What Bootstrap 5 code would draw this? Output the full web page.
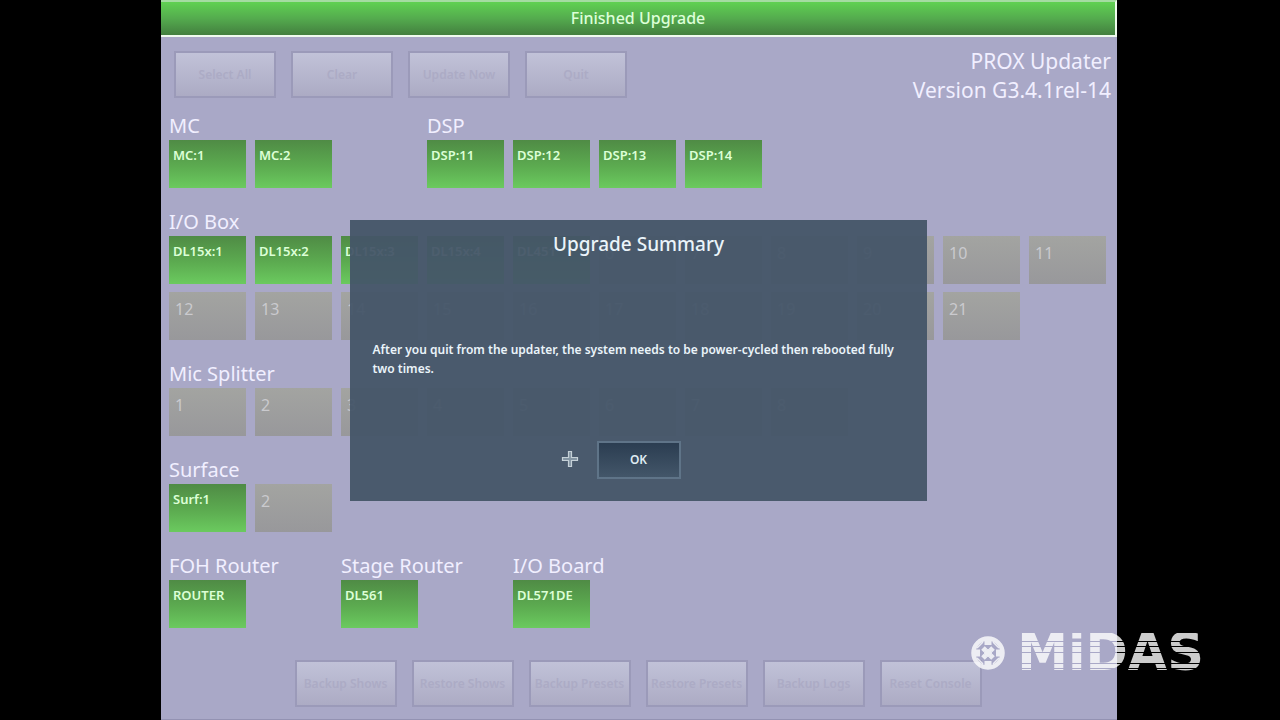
<!DOCTYPE html>
<html lang="en">
<head>
<meta charset="utf-8">
<meta name="viewport" content="width=device-width, initial-scale=1">
<title>PROX Updater</title>
<link href="https://cdn.jsdelivr.net/npm/bootstrap@5.3.0/dist/css/bootstrap.min.css" rel="stylesheet">
<style>
  body { background: #000; font-family: "Noto Sans", sans-serif; min-height: 100vh; padding: 0 163px 0 161px; }
  .updater { min-height: 100vh; background: #a9a8c7; border-bottom: 1px solid #9392b2; color: #f1efff; }
  .status-bar { height: 37px; border: 2px solid #effbee; border-left: 0; border-top-color: #a5dca2;
    background: linear-gradient(#60d152, #54ab4e 50%, #437f3f); color: #dcffd8; font-size: 16px; font-weight: 500; line-height: 33px; }
  .toolbar-row { height: 75px; padding: 14px 6px 0 13px; }
  .tool-group { gap: 15px; }
  .tool-btn, .tool-btn:disabled { width: 102px; height: 47px; padding: 0; border: 2px solid #9b9ab9; border-radius: 0; opacity: 1;
    background: linear-gradient(#c1c2d8, #acabc4); color: #acabc5; font-size: 12px; font-weight: 600; white-space: nowrap; }
  .version { font-size: 21px; line-height: 29px; margin-top: -4px; }
  .board { padding: 0 11px 0 8px; }
  .unit-row { display: grid; grid-template-columns: repeat(11, 1fr); column-gap: 9px; margin-bottom: 20px; }
  .unit-group { display: grid; gap: 8px 9px; }
  .span-2 { grid-column: span 2; grid-template-columns: repeat(2, 1fr); }
  .span-3 { grid-column: span 3; grid-template-columns: repeat(3, 1fr); }
  .span-4 { grid-column: span 4; grid-template-columns: repeat(4, 1fr); }
  .span-11 { grid-column: span 11; grid-template-columns: repeat(11, 1fr); }
  .unit-title { grid-column: 1 / -1; font-size: 20px; font-weight: 400; line-height: 28px; margin: 0 0 -8px; white-space: nowrap; }
  .unit { display: flex; align-items: flex-start; min-width: 0; height: 48px; border: 0; padding: 5px 6px; background: linear-gradient(#a3a4a1, #98989b); color: #cacace; font-size: 16px; line-height: 24px; }
  .unit.ready { padding: 5px 4px; background: linear-gradient(#4f8b45, #5cab50 55%, #6bca5f); color: #dcffd6; font-size: 13px; font-weight: 600; line-height: 20px; }
  .lower-tools { padding: 12px 2px 0 0; }
  .dialog-layer { padding: 2px 2px 0 0; }
  .summary { width: min(577px, 94%); height: 281px; background: rgba(68, 85, 104, .95); color: #eaf4fa; padding: 10px 22px 22px 23px; }
  .summary h2 { font-size: 19px; font-weight: 500; line-height: 28px; margin: 0; }
  .summary p { font-size: 12px; font-weight: 600; line-height: 19px; margin: 82px 0 0; }
  .ok-btn { width: 84px; height: 38px; border: 2px solid #5f7488; background: linear-gradient(#2b3d51, #435669); color: #dfebf2; font-size: 12px; font-weight: 600; line-height: 1; padding: 0; }
  .pointer { left: 211px; bottom: 33px; }
  .watermark { right: 76px; bottom: 47px; opacity: .8; gap: 12px; }
  .brand-name { font: bold 51px/40px "DejaVu Sans", sans-serif; color: transparent; -webkit-background-clip: text; background-clip: text;
    background-image: linear-gradient(#fff 8px, transparent 8px, transparent 9px, #fff 9px, #fff 13px, transparent 13px, transparent 14px, #fff 14px, #fff 19px, transparent 19px, transparent 20px, #fff 20px, #fff 30px, transparent 30px, transparent 31px, #fff 31px, #fff 35px, transparent 35px, transparent 36px, #fff 36px); }
</style>
</head>
<body class="position-relative">
<main class="updater position-relative">
  <header class="status-bar text-center">Finished Upgrade</header>
  <div class="toolbar-row d-flex justify-content-between">
    <div class="tool-group d-flex">
      <button type="button" class="btn tool-btn" disabled>Select All</button>
      <button type="button" class="btn tool-btn" disabled>Clear</button>
      <button type="button" class="btn tool-btn" disabled>Update Now</button>
      <button type="button" class="btn tool-btn" disabled>Quit</button>
    </div>
    <div class="version text-end">PROX Updater<br>Version G3.4.1rel-14</div>
  </div>
  <div class="board">
    <div class="unit-row">
      <section class="unit-group span-3">
        <h2 class="unit-title">MC</h2>
        <button class="unit ready">MC:1</button><button class="unit ready">MC:2</button>
      </section>
      <section class="unit-group span-4">
        <h2 class="unit-title">DSP</h2>
        <button class="unit ready">DSP:11</button><button class="unit ready">DSP:12</button><button class="unit ready">DSP:13</button><button class="unit ready">DSP:14</button>
      </section>
    </div>
    <div class="unit-row">
      <section class="unit-group span-11">
        <h2 class="unit-title">I/O Box</h2>
        <button class="unit ready">DL15x:1</button><button class="unit ready">DL15x:2</button><button class="unit ready">DL15x:3</button><button class="unit ready">DL15x:4</button><button class="unit ready">DL451</button>
        <button class="unit">6</button><button class="unit">7</button><button class="unit">8</button><button class="unit">9</button><button class="unit">10</button><button class="unit">11</button>
        <button class="unit">12</button><button class="unit">13</button><button class="unit">14</button><button class="unit">15</button><button class="unit">16</button><button class="unit">17</button><button class="unit">18</button><button class="unit">19</button><button class="unit">20</button><button class="unit">21</button>
      </section>
    </div>
    <div class="unit-row">
      <section class="unit-group span-11">
        <h2 class="unit-title">Mic Splitter</h2>
        <button class="unit">1</button><button class="unit">2</button><button class="unit">3</button><button class="unit">4</button><button class="unit">5</button><button class="unit">6</button><button class="unit">7</button><button class="unit">8</button>
      </section>
    </div>
    <div class="unit-row">
      <section class="unit-group span-2">
        <h2 class="unit-title">Surface</h2>
        <button class="unit ready">Surf:1</button><button class="unit">2</button>
      </section>
    </div>
    <div class="unit-row">
      <section class="unit-group span-2"><h2 class="unit-title">FOH Router</h2><button class="unit ready">ROUTER</button></section>
      <section class="unit-group span-2"><h2 class="unit-title">Stage Router</h2><button class="unit ready">DL561</button></section>
      <section class="unit-group span-2"><h2 class="unit-title">I/O Board</h2><button class="unit ready">DL571DE</button></section>
    </div>
  </div>
  <div class="lower-tools tool-group d-flex justify-content-center">
    <button type="button" class="btn tool-btn" disabled>Backup Shows</button>
    <button type="button" class="btn tool-btn" disabled>Restore Shows</button>
    <button type="button" class="btn tool-btn" disabled>Backup Presets</button>
    <button type="button" class="btn tool-btn" disabled>Restore Presets</button>
    <button type="button" class="btn tool-btn" disabled>Backup Logs</button>
    <button type="button" class="btn tool-btn" disabled>Reset Console</button>
  </div>
  <div class="dialog-layer position-absolute top-0 start-0 w-100 h-100 d-flex align-items-center justify-content-center">
    <div class="summary position-relative d-flex flex-column" role="dialog" aria-labelledby="summary-title">
      <h2 id="summary-title" class="text-center">Upgrade Summary</h2>
      <p>After you quit from the updater, the system needs to be power-cycled then rebooted fully two times.</p>
      <button type="button" class="ok-btn mt-auto mx-auto">OK</button>
      <svg class="pointer position-absolute" width="18" height="18" viewBox="0 0 18 18" aria-hidden="true">
        <path d="M7.500 1.500h3v6h6v3h-6v6h-3v-6h-6v-3h6z" fill="#8495a3" stroke="#c5d0d7" stroke-width="1.200"/>
      </svg>
    </div>
  </div>
</main>
<div class="watermark position-absolute d-flex align-items-center">
  <svg width="34" height="34" viewBox="0 0 34 34" aria-hidden="true">
    <g fill="none" stroke="#fff">
      <circle cx="17" cy="17" r="14.500" stroke-width="4.500"/>
      <path d="M17 3v6M17 25v6M3 17h6M25 17h6" stroke-width="7"/>
      <path d="M12 12l2.500 2.500M19.500 19.500l2.500 2.500M22 12l-2.500 2.500M14.500 19.500l-2.500 2.500" stroke-width="5"/>
      <path d="M6 12l6-6M22 6l6 6M28 22l-6 6M12 28l-6-6" stroke-width="1.500"/>
    </g>
    <circle cx="17" cy="17" r="4" fill="#fff"/>
  </svg>
  <span class="brand-name">MiDAS</span>
</div>
<script src="https://cdn.jsdelivr.net/npm/bootstrap@5.3.0/dist/js/bootstrap.bundle.min.js"></script>
</body>
</html>
